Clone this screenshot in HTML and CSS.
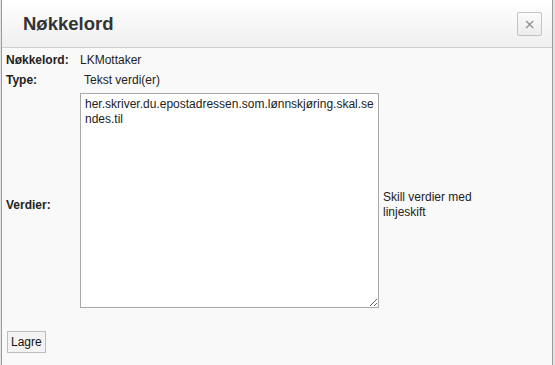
FILE: index.html
```html
<!DOCTYPE html>
<html>
<head>
	<title>Nøkkelord</title>
	<meta charset="utf-8">
	<link rel="stylesheet" href="styles.css">
</head>
<body>
	<div class="dialog">
		<div class="dialog-header">
			<h3 class="dialog-title">Nøkkelord</h3>
			<button class="close-button">&times;</button>
		</div>
		<div class="dialog-body">
			<table class="form-table">
				<tr class="row-name">
					<th>Nøkkelord:</th>
					<td>LKMottaker</td>
					<td></td>
				</tr>
				<tr class="row-type">
					<th>Type:</th>
					<td><span class="type-text">Tekst verdi(er)</span></td>
					<td></td>
				</tr>
				<tr class="row-values">
					<th>Verdier:</th>
					<td><textarea class="values">her.skriver.du.epostadressen.som.lønnskjøring.skal.sendes.til</textarea></td>
					<td class="hint">Skill verdier med linjeskift</td>
				</tr>
			</table>
			<button class="save-button">Lagre</button>
		</div>
	</div>
</body>
</html>
```

FILE: styles.css
```css
body
{
	margin: 0px;
	padding: 0px 2px 0px 1px;
	background: #e4e4e4;
	font-family: "Liberation Sans", Arial, sans-serif;
	font-size: 12px;
	color: #222;
}

.dialog
{
	background: #f9f9f9;
	border-left: 1px solid #9a9a9a;
	border-right: 1px solid #9a9a9a;
	height: 365px;
	box-sizing: border-box;
}

.dialog-header
{
	display: flex;
	align-items: center;
	justify-content: space-between;
	height: 47px;
	padding: 0px 10px 0px 21px;
	background: linear-gradient(#ffffff, #efefef);
	border-bottom: 1px solid #cfcfcf;
}

.dialog-title
{
	margin: 1px 0px 0px 0px;
	font-size: 18.5px;
	font-weight: bold;
	color: #333;
}

.close-button
{
	width: 25px;
	height: 24px;
	padding: 0px;
	margin-top: 1px;
	background: linear-gradient(#fbfbfb, #ececec);
	border: 1px solid #c4c4c4;
	border-radius: 2px;
	color: #888;
	font-family: "DejaVu Sans", sans-serif;
	font-size: 14px;
	line-height: 20px;
}

.form-table
{
	border-collapse: collapse;
	margin: 2px 0px 0px 2px;
}

.form-table th
{
	text-align: left;
	font-weight: bold;
	padding: 2px 2px;
	width: 70px;
}

.form-table td
{
	padding: 2px 2px;
}

.row-name th, .row-name td
{
	height: 15px;
}

.row-type th, .row-type td
{
	height: 15px;
	padding-top: 3px;
	padding-bottom: 4px;
}

.row-values th, .row-values .hint
{
	padding-top: 10px;
}

.type-text
{
	padding-left: 4px;
}

.values
{
	display: block;
	width: 299px;
	height: 215px;
	box-sizing: border-box;
	margin: 0px;
	padding: 3px 4px;
	border: 1px solid #a9a9a9;
	background: white;
	font-family: "Liberation Sans", Arial, sans-serif;
	font-size: 12px;
	line-height: 15px;
	color: #222;
	word-break: break-all;
}

.hint
{
	width: 120px;
	vertical-align: middle;
	padding-left: 3px;
	line-height: 15px;
}

.save-button
{
	margin: 21px 0px 0px 5px;
	height: 22px;
	padding: 0px 3px;
	font-family: "Liberation Sans", Arial, sans-serif;
	font-size: 12px;
	color: #111;
	background: #f3f3f3;
	border: 1px solid #bdbdbd;
}
```
